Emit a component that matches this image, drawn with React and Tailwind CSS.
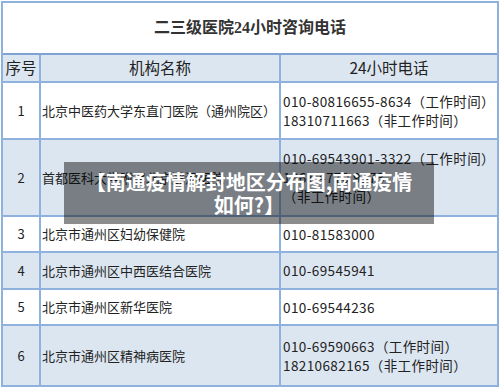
const rows = [
  { no: '1', name: '北京中医药大学东直门医院（通州院区）', phones: ['010-80816655-8634（工作时间）', '18310711663（非工作时间）'], h: 'h-[57px]', blue: false },
  { no: '2', name: '首都医科大学附属北京潞河医院', phones: ['010-69543901-3322（工作时间）', '1861 4770 9973', '（非工作时间）'], h: 'h-[77px]', blue: true },
  { no: '3', name: '北京市通州区妇幼保健院', phones: ['010-81583000'], h: 'h-[36px]', blue: false },
  { no: '4', name: '北京市通州区中西医结合医院', phones: ['010-69545941'], h: 'h-[37px]', blue: true },
  { no: '5', name: '北京市通州区新华医院', phones: ['010-69544236'], h: 'h-[36px]', blue: false },
  { no: '6', name: '北京市通州区精神病医院', phones: ['010-69590663（工作时间）', '18210682165（非工作时间）'], h: 'h-[59px]', blue: true },
];

const App = () => {
  return (
    <div className="relative w-[500px] h-[388px] bg-white overflow-hidden font-['Noto_Sans_CJK_SC',sans-serif] text-[#222]">
      <div className="ml-[1px] mt-[1px] w-[498px] border-2 border-[#8fb1dd]">
        {/* Title */}
        <div className="h-[52px] flex items-center justify-center border-b-2 border-[#7fa3d4]">
          <span className="font-['Liberation_Serif','Noto_Sans_CJK_SC',serif] font-bold text-[16px] text-[#333]">
            二三级医院24小时咨询电话
          </span>
        </div>

        {/* Header */}
        <div className="flex h-[28px] bg-[#dce6f1] border-b-2 border-[#8fb1dd] text-[15.5px]">
          <div className="w-[38px] flex items-center justify-center border-r-2 border-[#8fb1dd]">序号</div>
          <div className="w-[240px] flex items-center justify-center border-r-2 border-[#8fb1dd]">机构名称</div>
          <div className="flex-1 flex items-center justify-center">24小时电话</div>
        </div>

        {rows.map((r, i) => (
          <div
            key={r.no}
            className={`flex ${r.h} text-[13px] ${r.blue ? 'bg-[#dce6f1]' : 'bg-white'} ${i < rows.length - 1 ? 'border-b-2 border-[#8fb1dd]' : ''}`}
          >
            <div className="w-[38px] flex items-center justify-center border-r-2 border-[#8fb1dd]">{r.no}</div>
            <div className="w-[240px] flex items-center pl-[1px] border-r-2 border-[#8fb1dd] whitespace-nowrap">{r.name}</div>
            <div className="flex-1 flex flex-col justify-center pl-[2px] text-[13.5px] leading-[19px] whitespace-nowrap tracking-[0.4px]">
              {r.phones.map((p) => (
                <span key={p}>{p}</span>
              ))}
            </div>
          </div>
        ))}
      </div>

      {/* Caption overlay */}
      <div className="absolute left-[64px] top-[162px] w-[370px] h-[62px] bg-black/45 flex flex-col items-center justify-center text-white font-bold text-[20px] leading-[23px] whitespace-nowrap">
        <span>【南通疫情解封地区分布图,南通疫情</span>
        <span>如何?】</span>
      </div>
    </div>
  );
};

export default App;
